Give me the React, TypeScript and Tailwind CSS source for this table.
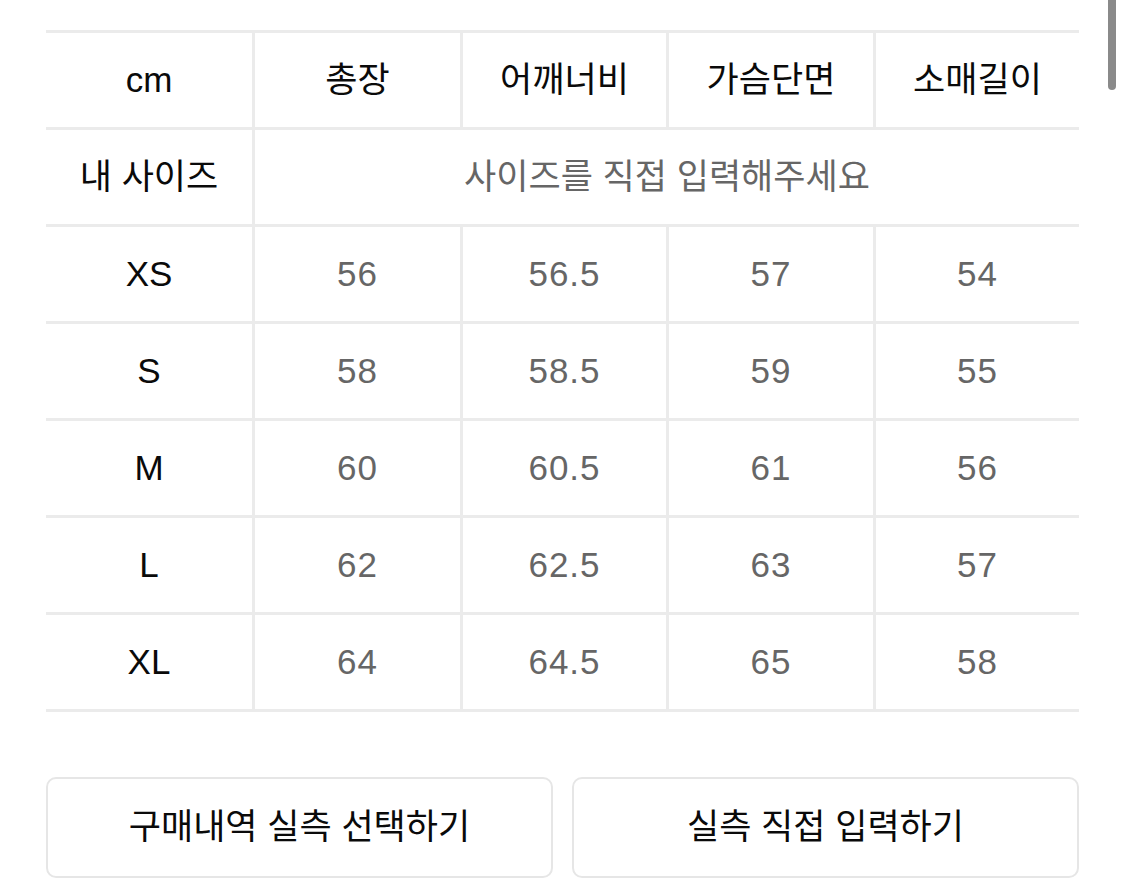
const font = { fontFamily: '"Liberation Sans", "Noto Sans CJK KR", sans-serif' };

const headers = ['총장', '어깨너비', '가슴단면', '소매길이'];

const rows: { size: string; values: string[] }[] = [
  { size: 'XS', values: ['56', '56.5', '57', '54'] },
  { size: 'S', values: ['58', '58.5', '59', '55'] },
  { size: 'M', values: ['60', '60.5', '61', '56'] },
  { size: 'L', values: ['62', '62.5', '63', '57'] },
  { size: 'XL', values: ['64', '64.5', '65', '58'] },
];

function Cell({ children, last, muted }: { children: React.ReactNode; last?: boolean; muted?: boolean }) {
  return (
    <div
      className={
        'flex h-[94px] items-center justify-center text-[35px] ' +
        (last ? '' : 'border-r-[3px] border-[#ebebeb] ') +
        (muted ? 'text-[#666666]' : 'text-[#0a0a0a]')
      }
    >
      {children}
    </div>
  );
}

export default function App() {
  return (
    <div className="relative min-h-[892px] w-[1125px] overflow-hidden bg-white" style={font}>
      <div className="absolute right-[9px] top-[-10px] h-[100px] w-[8px] rounded-full bg-[#8a8a8a]" />

      <div className="ml-[46px] w-[1033px] pt-[30px]">
        {/* header */}
        <div className="grid grid-cols-[209px_208px_206px_207px_203px] border-t-[3px] border-[#ebebeb]">
          <Cell>cm</Cell>
          {headers.map((h, i) => (
            <Cell key={h} last={i === headers.length - 1}>
              {h}
            </Cell>
          ))}
        </div>

        {/* my size */}
        <div className="grid grid-cols-[209px_1fr] border-t-[3px] border-[#ebebeb]">
          <Cell>내 사이즈</Cell>
          <Cell last muted>
            사이즈를 직접 입력해주세요
          </Cell>
        </div>

        {rows.map((r) => (
          <div
            key={r.size}
            className="grid grid-cols-[209px_208px_206px_207px_203px] border-t-[3px] border-[#ebebeb]"
          >
            <Cell>{r.size}</Cell>
            {r.values.map((v, i) => (
              <Cell key={i} last={i === r.values.length - 1} muted>
                <span className="tracking-[1px]">{v}</span>
              </Cell>
            ))}
          </div>
        ))}
        <div className="border-t-[3px] border-[#ebebeb]" />

        <div className="mt-[65px] flex gap-[19px]">
          <button className="flex h-[101px] w-[507px] items-center justify-center rounded-[10px] border-2 border-[#e6e6e6] bg-white text-[35px] text-[#0a0a0a]">
            구매내역 실측 선택하기
          </button>
          <button className="flex h-[101px] w-[507px] items-center justify-center rounded-[10px] border-2 border-[#e6e6e6] bg-white text-[35px] text-[#0a0a0a]">
            실측 직접 입력하기
          </button>
        </div>
      </div>
    </div>
  );
}
